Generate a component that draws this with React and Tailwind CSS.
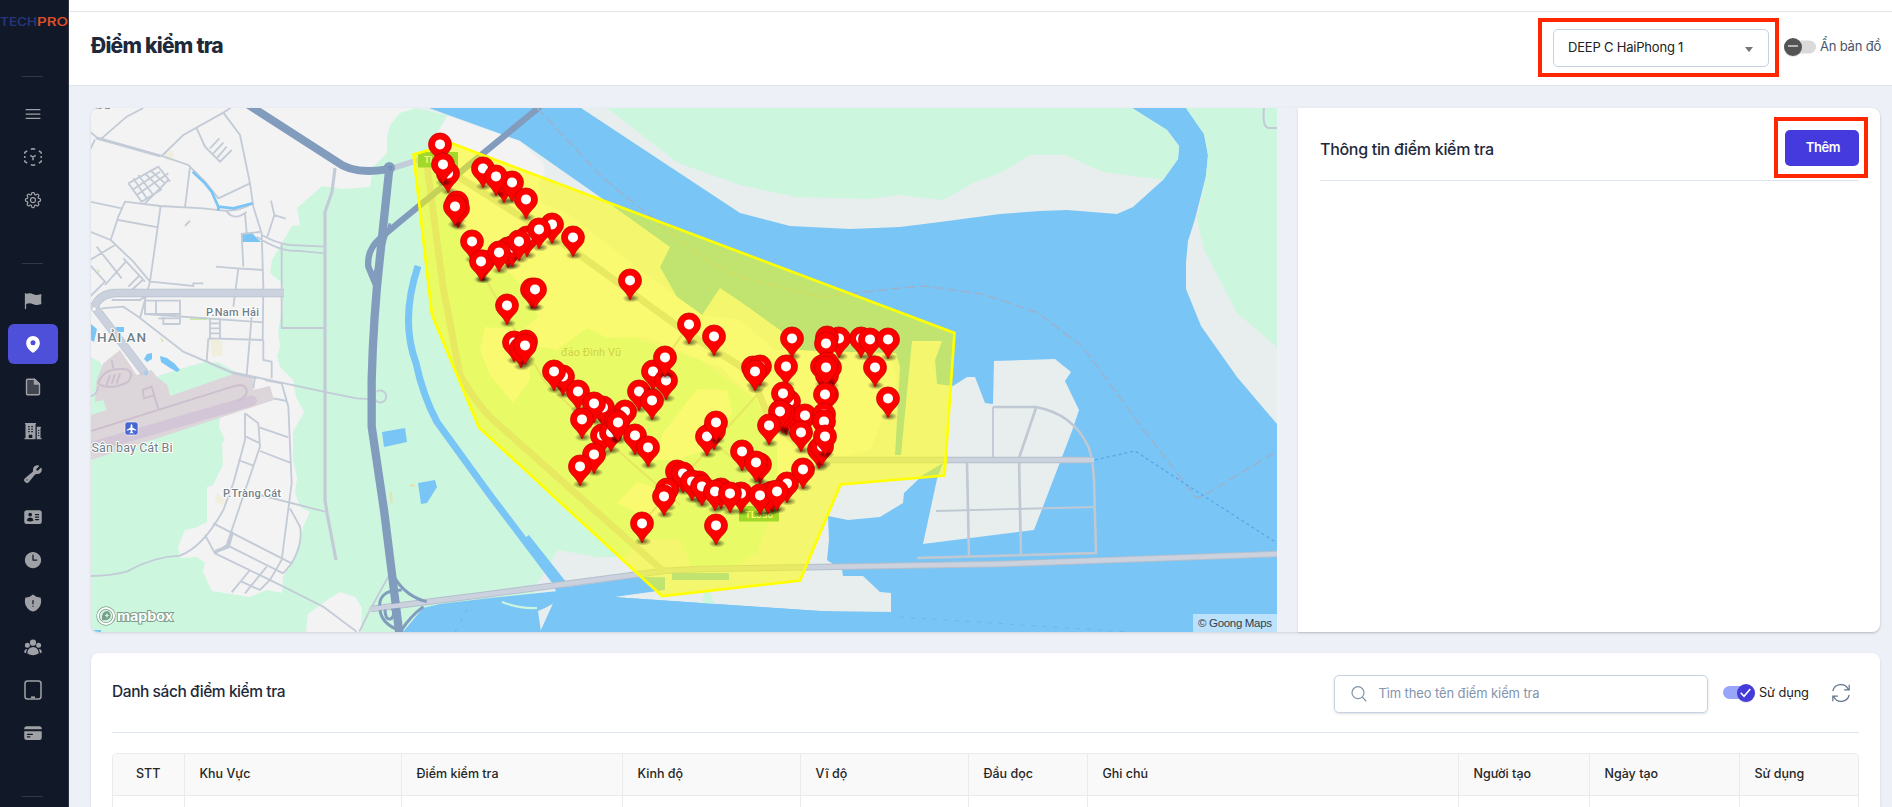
import React from 'react';
import {
  HiFlag, HiMapPin, HiBuildingOffice2, HiWrench, HiIdentification, HiClock,
  HiShieldExclamation, HiUserGroup, HiCreditCard, HiOutlineBars3, HiOutlineCog8Tooth,
} from 'react-icons/hi2';

const PINS = [
  [440,144],[448,173],[443,164],[483,168],[504,183],[512,182],[496,176],[526,199],[457,202],[458,208],[455,206],
  [472,241],[483,261],[481,261],[508,248],[512,247],[527,237],[519,241],[499,252],[552,224],[539,229],[573,237],
  [630,280],[689,324],[714,336],[532,289],[535,289],[507,305],[514,342],[526,341],[521,348],[525,345],
  [563,376],[554,371],[578,391],[603,407],[594,403],[582,419],[639,391],[653,371],[666,380],[665,357],[652,400],
  [625,411],[602,435],[611,432],[616,420],[618,422],[635,435],[648,447],[594,454],[580,466],[714,430],[707,436],[716,422],
  [742,451],[760,464],[756,462],[677,471],[683,473],[699,482],[692,481],[702,486],[667,489],[664,496],[642,523],[716,525],
  [721,489],[715,491],[741,493],[730,493],[772,492],[768,494],[760,495],[787,483],[777,491],[803,469],
  [792,338],[786,366],[753,367],[760,366],[755,371],[789,401],[783,393],[786,415],[783,413],[780,411],[769,425],[805,415],[801,432],
  [839,338],[827,337],[826,343],[861,338],[870,339],[888,339],[875,367],[888,398],[827,375],[822,366],[830,367],[827,363],[826,367],
  [827,394],[825,394],[824,414],[824,421],[819,449],[822,446],[825,436],
];

function Pin({ x, y }) {
  return (
    <g transform={`translate(${x} ${y + 0.4})`}>
      <ellipse cx="1" cy="18" rx="8.5" ry="4.2" fill="url(#pinShadow)" />
      <path d="M0 19.6C-1.6 15.4-4.6 11.6-8.4 7.9A11.5 11.5 0 1 1 8.4 7.9C4.6 11.6 1.6 15.4 0 19.6Z" fill="#fe0000" stroke="#c00000" strokeWidth=".7" />
      <circle r="5" fill="#fff" />
    </g>
  );
}

function MapView() {
  return (
    <svg className="block h-full w-full" viewBox="91 108 1186 524" preserveAspectRatio="none">
      <defs>
        <radialGradient id="pinShadow">
          <stop offset="0" stopColor="#000" stopOpacity=".6" />
          <stop offset="1" stopColor="#000" stopOpacity="0" />
        </radialGradient>
      </defs>
      <rect x="91" y="108" width="1186" height="524" fill="#78c5f6" />

      {/* east and north banks */}
      <path fill="#e7eeed" d="M581 108L740 213 790 226 850 229 900 227 940 222 1000 214 1040 211 1067 210 1117 214 1133 207 1163 180 1178 159 1179 146 1167 130 1132 108Z" />
      <path fill="#cdf6df" d="M607 108L678 163 740 185 796 197 868 199 900 195 943 200 973 183 1000 173 1030 155 1065 155 1103 172 1163 180 1178 159 1179 146 1167 130 1132 108Z" />
      <path fill="#e7eeed" d="M1186 108L1204 134 1208 155 1206 176 1195 219 1188 241 1186 262 1186 289 1201 326 1237 377 1277 424V108Z" />
      <path fill="#cdf6df" d="M1186 108L1204 134 1208 155 1206 176 1197 219 1204 250 1237 313 1277 347V108Z" />

      {/* main land */}
      <path fill="#e7eeed" d="M91 108H429L520 141 600 197 670 247 660 267 677 297 702 315 720 288 738 300 780 330 800 350 843 353 896 353 900 367 895 455 901 455 912 341 942 341 935 360 937 384 953 386 967 377 975 377 985 403 993 404 994 361 1055 359 1071 372 1065 381 1079 410 1072 431 1034 530 923 544 937 479 943 463 923 475 904 493 903 503 880 517 848 520 828 516 829 540 827 560 842 570 843 576 863 576 880 592 891 593V612L820 611 700 603 613 597 665 590 665 577 638 577 560 588 540 632H91Z" />
      <path fill="#cdf6df" d="M91 108H415L450 116 437 150 460 160 640 340 700 360 757 400 777 447 777 483 770 517 757 553 727 570 691 575 680 545 650 540 640 557 597 557 558 550 535 587 530 632H91Z" />
      <path fill="#cdf6df" d="M704 592H710L714 604H702Z" />
      <path fill="#f4f3f4" d="M447 116L520 141 543 163 545 172 538 183 542 203 570 215 640 270 702 315 740 320 775 350 890 353 897 380 870 450 829 460 790 470 777 483 777 447 757 400 720 367 700 360 647 337 607 338 587 328 557 350 530 345 530 380 513 403 490 375 480 350 485 327 523 330 538 317 530 295 510 273 485 270 460 235 437 165 436 135Z" />
      <path fill="#f4f3f4" d="M697 389L727 390 732 413 713 447 677 460 655 460 663 433ZM617 503L637 482 653 487 667 513 647 517Z" />
      <path fill="#e7eeed" d="M623 557L647 539 680 539 692 568 665 585Z" />
      <path fill="#f4f3f4" d="M91 108H415L400 113 390 125 387 137 387 153 373 167 370 187 343 189 322 186 297 208 300 225 292 226 282 243 272 260 270 273 282 283 283 307 278 330 280 347 277 357 280 367 293 380 296 397 304 412 293 432 293 460 297 478 295 493 300 507 310 512 303 527 300 542 292 563 283 577 282 593 267 590 250 597 212 591 203 572 205 563 197 557 180 558 178 547 185 530 195 528 207 522 207 487 213 485 223 465 222 443 225 440 219 427 220 418 253 404 252 376 224 371 204 362 158 376 142 395 91 395Z" />
      <path fill="#f4f3f4" d="M308 614L330 598 340 592 355 597 362 608 361 632H306Z" />
      <path fill="#cdf6df" d="M91 357L100 362 110 380 91 395ZM158 376L190 366 218 362 240 374 170 387Z" />

      {/* south-west waterways */}
      <path fill="#78c5f6" d="M403 632L423 608 440 604 490 598 558 591 556 602 545 608 538 611 541 632ZM573 632L580 606 590 594 580 588 637 578 665 577 665 589 613 597 820 611 891 616 895 632Z" />
      <path d="M502 602Q520 609 537 608" stroke="#cdf6df" strokeWidth="2" fill="none" />
      <path d="M418 266Q400 320 416 363 423 396 437 422L490 495 555 581 580 632" fill="none" stroke="#78c5f6" strokeWidth="7" />
      <path d="M525 538L562 585 585 632" fill="none" stroke="#78c5f6" strokeWidth="10" />
      <path fill="#78c5f6" d="M382 432L405 428 407 442 384 447ZM418 483L435 480 437 487 427 503 421 504ZM241 233H252L261 242H241ZM91 324L97 329 94 342 91 340ZM116 327H124V332H116ZM147 354L152 353 152 359 147 362 144 359ZM160 356L167 358 175 364 180 370 177 372 170 368 161 362ZM91 630H101V632H91Z" />
      <path fill="#f0eedc" d="M164 152L174 151 174 157 166 161ZM210 339L222 341 223 355 212 357ZM217 493L228 502 222 505 215 502Z" />
      <path fill="#dbe8bd" d="M410 484H415V487H410ZM389 492L392 491 393 502 390 503Z" />
      <path fill="#cdeaab" d="M190 317H207V320H190ZM160 337L164 341 162 342ZM97 268L100 271 98 273Z" />

      {/* airport */}
      <g transform="translate(90 360) scale(.33333)">
        <path fill="#dcd5da" d="M3 165L50 150 40 120 15 125 20 60 40 10 90 -30 140 45 185 30 200 50 232 75 240 108 430 42 488 50 490 90 540 78 552 120 3 300Z" />
        <path d="M3 262L485 122" stroke="#d3c6d6" strokeWidth="32" strokeLinecap="round" fill="none" />
        <path d="M3 213L420 82Q470 65 470 95 470 110 440 125M205 148L185 80 158 90 162 115 192 106M25 70Q40 20 110 28 135 40 115 65 70 90 30 75ZM50 75L60 45M65 72L75 42M80 70L90 40M65 0L70 25" stroke="#cdc0ce" strokeWidth="6" fill="none" />
      </g>

      {/* local streets */}
      <g fill="none" stroke="#c3cbd6" strokeWidth="5.5">
        <g transform="translate(90 100) scale(.33333)">
          <path d="M0 95L20 112 215 168 295 195 345 245 385 295M15 118L0 150M35 115L110 50 160 24M215 168L280 105 400 38 430 18M400 38L450 105 480 250 490 320 515 400 520 560 518 720M320 85L345 140 390 185 425 150M360 145L388 115M370 160L400 128M380 175L410 140M385 295L480 250M300 200L285 322M0 305L95 325M62 420L85 350 105 305 210 318 340 325 400 332Q450 335 488 310M410 335Q435 365 470 335M85 360L205 382M212 318L180 545 150 655M285 378L300 362M465 340L470 400M543 302L553 345 587 356M553 345L532 410M455 402L510 396M455 402L460 500M515 405Q560 430 600 435L705 440M500 410Q570 455 620 452L705 460M378 500L440 505 520 510M445 505L430 620M575 430V684H705M182 545L310 558V550H340M62 420L130 485 180 545M0 395L62 420M0 480L75 435M20 440L95 535M0 495L45 545 0 590M45 555L110 482M100 475L165 545M115 560L150 525M125 570L158 540M65 600H150L165 590M165 602H270V672M165 602V642H270M198 602V642M220 650V672H270M205 655H270" />
          <path d="M308 215L345 250 365 275 385 320V332M385 320L430 325 488 310" stroke="#78c5f6" strokeWidth="8" />
          <path d="M115 250L205 200 240 245M115 250L155 305 212 270M130 235L170 295M145 225L190 285M165 220L215 270M180 210L225 250M140 285L235 220M130 268L210 215M165 310L235 240" />
          <path d="M35 625L100 620 145 650 280 755 430 820 500 835M165 642L520 667M355 715L520 720M360 655V715M390 655V715M360 670H390M360 685H390M360 700H390M355 715L350 785M485 650L470 825M520 720V780L545 785V835" />
        </g>
        <g transform="translate(90 360) scale(.33333)">
          <path d="M340 0L420 35 560 65 700 95 800 115 855 118A18 18 0 1 0 860 95M495 50L490 85M525 60L575 70 595 140 605 370 575 600 540 660 510 690 455 665M550 115L590 123M465 160L505 190 510 260 410 555 375 580 345 525M465 160V240L430 370 400 450Q340 560 270 587 190 590 110 635 60 648 0 648M510 203L595 232M468 230L510 250M510 273L600 308M445 300L490 317M370 490L605 610M375 580L550 665 700 740 800 815M420 560L580 640M600 445L630 500Q640 550 605 610L580 640M425 697L480 630M465 700L530 620M510 405L705 455M808 815L840 750 895 650M3 108Q20 105 25 80" />
          <path d="M375 575L415 560 427 515" strokeWidth="10" />
        </g>
        <path d="M1264 108Q1262 128 1269 128H1277" strokeWidth="2" />
        <path d="M335 168L332 192 325 212V500L327 513 336 560" strokeWidth="3.2" />
        <path d="M96 138L160 156" strokeWidth="2.6" />
      </g>

      {/* port roads */}
      <g fill="none" stroke="#bfc8d3">
        <path d="M993 407H1036Q1073 414 1088 446 1093 458 1094 480L1096 553 917 558" strokeWidth="2.6" />
        <path d="M993 407V458M936 511L1096 507M917 558L1096 553" strokeWidth="1.8" />
        <path d="M1036 408L1019 458 1021 556M967 462L969 556" strokeWidth="2.6" />
      </g>

      {/* arterial roads */}
      <g fill="none" strokeLinejoin="round">
        <path d="M93 310Q98 294 115 293H284M96 309L145 373" stroke="#b7c1ce" strokeWidth="8.5" />
        <path d="M93 310Q98 294 115 293H284M96 309L145 373" stroke="#cbd2de" strokeWidth="7" />
        <circle cx="94" cy="309" r="2.5" fill="#f4f3f4" stroke="#b7c1ce" strokeWidth=".8" />
        <circle cx="146" cy="373" r="2.4" fill="#a9cfe6" />
        <path d="M371 609L490 594 663 571 700 569 1000 564 1277 554M827 460H1094" stroke="#b5bfcd" strokeWidth="6.5" />
        <path d="M371 609L490 594 663 571 700 569 1000 564 1277 554M827 460H1094" stroke="#cbd2de" strokeWidth="4.6" />
        <path d="M390 169L428 157" stroke="#c2ccda" strokeWidth="6" />
        <path d="M483 275L545 382 600 435 680 505M640 395L689 325M642 523L765 386M705 436L760 480" stroke="#c8cbd1" strokeWidth="2" />
        <path d="M427 165L443 287 460 375Q474 400 490 417L663 571M437 163L573 250 687 333 750 372 767 413Q800 452 827 460" stroke="#cbcfd4" strokeWidth="7" />
        <g transform="translate(90 100) scale(.33333)" stroke="#829cbd">
          <path d="M465 8L740 185Q790 225 890 208" strokeWidth="24" />
          <path d="M898 205L870 470Q850 650 845 840V980L882 1230 928 1600" strokeWidth="25" />
          <path d="M1350 20L930 365 870 415Q830 450 835 500L862 565" strokeWidth="19" />
          <path d="M900 370L880 440M848 530L862 500" strokeWidth="8" />
          <circle cx="898" cy="203" r="17" fill="#829cbd" stroke="none" />
          <path d="M895 205A5 5 0 1 1 897 208" stroke="#5c7da8" strokeWidth="2" />
          <path d="M915 1435Q950 1490 1010 1505M1000 1520Q960 1550 935 1590M935 1470Q860 1470 870 1530 875 1570 925 1590M885 1525Q885 1565 905 1555 920 1540 900 1515" strokeWidth="9" />
        </g>
        <path d="M371 609L402 605" stroke="#cbd2de" strokeWidth="4.6" strokeLinecap="round" />
        <path d="M537 108L603 178 640 208 710 263 740 277 820 297 900 288 923 286 983 294 1038 313 1083 347 1140 425 1196 498 1203 496 1277 451" stroke="#9fb0cb" strokeWidth="1.4" strokeDasharray="10 4" />
        <path d="M1095 460L1135 451 1193 489 1277 543" stroke="#54a5e5" strokeWidth="1.2" strokeDasharray="3 3" />
        <path d="M900 617L1130 632M455 632L471 602" stroke="#64b3ec" strokeWidth=".8" strokeDasharray="4 7" />
      </g>

      {/* map labels */}
      <g fontFamily="Roboto, sans-serif" fill="#6f8089" stroke="#fff" strokeWidth="2" paintOrder="stroke" strokeLinejoin="round">
        <text x="206" y="315.500" fontSize="11" fontWeight="500" textLength="53">P.Nam Hải</text>
        <text x="223" y="496.500" fontSize="11" fontWeight="500" textLength="58">P.Tràng Cát</text>
        <text x="97" y="342" fontSize="13.5" fontWeight="500" textLength="49">HẢI AN</text>
        <text x="91.5" y="452" fontSize="12.5" textLength="81">Sân bay Cát Bi</text>
        <text x="561" y="355.500" fontSize="11" textLength="60" stroke="none" fill="#9a9a9a">đảo Đình Vũ</text>
      </g>
      <path d="M94 108.500h3.500M98.500 108.500h3M105 108.500h5" stroke="#8a959c" strokeWidth="1.200" />
      <rect x="125" y="422" width="13" height="13" rx="2.500" fill="#4566d3" stroke="#fff" strokeWidth=".6" />
      <path d="M131.500 424l.9 1v2.500l3.800 2.300v1l-3.800-1v2.200l1.200.9v.7l-2.100-.5-2.100.5v-.7l1.200-.9v-2.200l-3.800 1v-1l3.800-2.300v-2.500z" fill="#fff" />

      <g fontFamily="Roboto, sans-serif" fontSize="9.500" fontWeight="500" fill="#fff">
        <rect x="418" y="152" width="40" height="15.500" rx="1" fill="#35ad5a" />
        <text x="424" y="163">TL356</text>
        <rect x="739" y="506" width="40" height="15.500" rx="1" fill="#35ad5a" />
        <text x="745" y="518" textLength="28">TL356</text>
      </g>
      <path d="M672 573H729V580H672Z" fill="#78c5f6" />

      {/* monitored area */}
      <path d="M413.500 154.500L452 143.500 955 333 944.500 475.500 840.500 484.500 800 580.500 662 596 479 427.500 432 315Z" fill="#ffff00" fillOpacity=".54" />
      <path d="M413.500 154.500L452 143.500 954.500 333 944.500 475.500 840.500 484.500 800 580.500 662 596 479 427.500 432 315Z" fill="none" stroke="#ffff00" strokeWidth="2.700" />

      {PINS.map(([x, y], i) => <Pin key={i} x={x} y={y} />)}

      {/* provider mark */}
      <g>
        <circle cx="106" cy="616" r="8" fill="none" stroke="#7d9c8b" strokeWidth="3.400" />
        <circle cx="106" cy="616" r="8" fill="none" stroke="#fff" strokeWidth="1.900" />
        <path d="M102 620Q101 611 108 611 112 614 110 618 107 621 102 620ZM107 613l.8 1.700 1.700.8-1.700.8-.8 1.700-.8-1.700-1.700-.8 1.700-.8Z" fill="#7d9c8b" fillRule="evenodd" />
        <text x="117" y="620.500" fontFamily="Inter, sans-serif" fontSize="13" fontWeight="700" textLength="56" lengthAdjust="spacingAndGlyphs" fill="#fff" stroke="#7d9c8b" strokeWidth="1.800" paintOrder="stroke">mapbox</text>
      </g>
      <rect x="1193" y="614" width="84" height="18" fill="#fff" fillOpacity=".5" />
      <text x="1198" y="627" fontFamily="Liberation Sans, sans-serif" fontSize="11.500" textLength="74" fill="#33404a">© Goong Maps</text>
    </svg>
  );
}

function ScanIcon() {
  return (
    <svg viewBox="0 0 18 18" className="size-[18px]" fill="none" stroke="currentColor" strokeWidth="1.5">
      <path d="M.8 5.800V4.500L3.200 2.800M6.800 1.200L9 .8 11.200 1.200M14.800 2.800L17.200 4.500V5.800M17.200 8v2M17.200 12.200V13.500L14.800 15.200M11.200 16.800L9 17.200 6.800 16.800M3.200 15.200L.8 13.500V12.200M.8 8v2M6.300 7.400L9 9.200 11.700 7.400M9 9.200V12.200" />
    </svg>
  );
}

function DocIcon() {
  return (
    <svg viewBox="0 0 16 18" className="h-[18px] w-4" stroke="currentColor" strokeWidth="1.400" strokeLinejoin="round">
      <path d="M1.500 2.500Q1.500 1.200 2.800 1.200H9.500L14.500 6V15.500Q14.500 16.800 13.200 16.800H2.800Q1.500 16.800 1.500 15.500Z" fill="#41454f" />
      <path d="M9.500 1.200V6H14.500Z" fill="currentColor" />
    </svg>
  );
}

function TabletIcon() {
  return (
    <svg viewBox="0 0 18 20" className="h-5 w-[18px]" fill="none" stroke="currentColor" strokeWidth="1.500">
      <rect x="1" y="1" width="16" height="18" rx="2.500" />
      <path d="M7 17.300h4" strokeWidth="1.800" />
    </svg>
  );
}

function SideItem({ active, children }) {
  return (
    <div className={active
      ? 'flex h-10 w-[50px] items-center justify-center rounded-md bg-[#4f50d9] text-white'
      : 'flex h-10 w-[50px] items-center justify-center text-[#9fa1a7]'}>
      {children}
    </div>
  );
}

function Sidebar() {
  return (
    <aside className="flex h-full w-[69px] shrink-0 flex-col overflow-hidden border-r border-[#2d3341] bg-[#111827]">
      <div className="h-[76px] shrink-0 pt-4">
        <svg viewBox="0 0 69 14" className="block h-3.5 w-[69px]" fontFamily="Inter, sans-serif" fontSize="11.200" fontWeight="600">
          <text x="0" y="10" textLength="37" lengthAdjust="spacingAndGlyphs" fill="#25357d">TECH</text>
          <text x="37" y="10" textLength="31" lengthAdjust="spacingAndGlyphs" fill="#d84f2a">PRO</text>
        </svg>
      </div>
      <div className="ml-[22px] h-px w-[21px] shrink-0 bg-[#323946]" />
      <div className="ml-2 mt-[17px] flex shrink-0 flex-col gap-[3px]">
        <SideItem><HiOutlineBars3 className="size-5" /></SideItem>
        <SideItem><ScanIcon /></SideItem>
        <SideItem><HiOutlineCog8Tooth className="size-5" /></SideItem>
      </div>
      <div className="ml-[22px] mt-[43px] h-px w-[21px] shrink-0 bg-[#323946]" />
      <div className="ml-2 mt-[17px] flex shrink-0 flex-col gap-[3.2px]">
        <SideItem><HiFlag className="size-5" /></SideItem>
        <SideItem active><HiMapPin className="size-5" /></SideItem>
        <SideItem><DocIcon /></SideItem>
        <SideItem><HiBuildingOffice2 className="size-5" /></SideItem>
        <SideItem><HiWrench className="size-5" /></SideItem>
        <SideItem><HiIdentification className="size-5" /></SideItem>
        <SideItem><HiClock className="size-5" /></SideItem>
        <SideItem><HiShieldExclamation className="size-5" /></SideItem>
        <SideItem><HiUserGroup className="size-5" /></SideItem>
        <SideItem><TabletIcon /></SideItem>
        <SideItem><HiCreditCard className="size-5" /></SideItem>
      </div>
      <div className="ml-[22px] mt-[43px] h-px w-[21px] shrink-0 bg-[#323946]" />
    </aside>
  );
}

function OffSwitch() {
  return (
    <svg viewBox="0 0 34 20" className="h-5 w-[34px] shrink-0">
      <rect x="6" y="3.500" width="27" height="13" rx="6.500" fill="#dadada" />
      <circle cx="10" cy="10.800" r="9" fill="#000" fillOpacity=".15" />
      <circle cx="10" cy="10" r="9" fill="#545454" />
      <path d="M5 9h10" stroke="#c8c8c8" strokeWidth="1.700" />
    </svg>
  );
}

function OnSwitch() {
  return (
    <svg viewBox="0 0 34 20" className="h-5 w-[34px] shrink-0">
      <rect x="1" y="3" width="30" height="13" rx="6.500" fill="#98a5f8" />
      <circle cx="24" cy="10.800" r="9" fill="#000" fillOpacity=".15" />
      <circle cx="24" cy="10" r="9" fill="#453adb" />
      <path d="M18.700 9.800l3.300 3.400 6.300-7.200" stroke="#fff" strokeWidth="1.600" fill="none" />
    </svg>
  );
}

function Header() {
  return (
    <header className="flex h-[86px] shrink-0 flex-col border-b border-[#dfe4ea] bg-white">
      <div className="h-3 shrink-0 border-b border-[#e4e6e9]" />
      <div className="flex h-[73px] items-start justify-between pl-[22px] pr-3">
        <h1 className="mt-[18px] text-[21px] font-extrabold leading-[32px] tracking-[-0.75px] text-[#1e293b]">Điểm kiểm tra</h1>
        <div className="flex">
          <div className="mt-1.5 h-[59px] w-[241px] border-4 border-[#ff2600] pl-[11px] pr-1.5 pt-[7px]">
            <div className="flex h-[38px] w-[216px] items-center justify-between rounded-[5px] border border-[#c5d2e2] pl-3.5 pr-[15px]">
              <span className="text-[13px] tracking-[-0.2px] text-[#212121]">DEEP C HaiPhong 1</span>
              <span className="mt-0.5 border-x-[4.5px] border-t-[5px] border-x-transparent border-t-[#757575]" />
            </div>
          </div>
          <div className="ml-1 mt-[23px] flex h-6 items-center">
            <OffSwitch />
            <span className="ml-[3px] w-[60px] whitespace-nowrap text-[13px] tracking-[-0.2px] text-[#475569]">Ẩn bản đồ</span>
          </div>
        </div>
      </div>
    </header>
  );
}

const COLUMNS = [
  ['STT', 'w-[71.5px]', 'justify-center'],
  ['Khu Vực', 'w-[217px]', ''],
  ['Điểm kiểm tra', 'w-[221px]', ''],
  ['Kinh độ', 'w-[178px]', ''],
  ['Vĩ độ', 'w-[168px]', ''],
  ['Đầu đọc', 'w-[119px]', ''],
  ['Ghi chú', 'w-[371px]', ''],
  ['Người tạo', 'w-[131px]', ''],
  ['Ngày tạo', 'w-[150px]', ''],
  ['Sử dụng', 'grow', ''],
];

function PointsCard() {
  return (
    <section className="mt-[21px] flex min-h-0 flex-1 flex-col rounded-t-lg bg-white px-[21px] shadow-sm">
      <div className="flex h-20 shrink-0 items-center border-b border-[#dde4ee] pt-[3px]">
        <h2 className="-mt-[5px] text-[15.5px] font-medium tracking-[-0.43px] text-[#1e293b]">Danh sách điểm kiểm tra</h2>
        <div className="ml-auto flex h-[38px] w-[374px] items-center rounded-[5px] border border-[#c5d2e2] pl-4 shadow-sm">
          <svg viewBox="0 0 16 16" className="size-4" fill="none" stroke="#8493aa" strokeWidth="1.200">
            <circle cx="7" cy="6.700" r="6" />
            <path d="M11.300 11l4 4.300" />
          </svg>
          <span className="-mt-px ml-[11.5px] text-[13px] tracking-[-0.12px] text-[#8394ad]">Tìm theo tên điểm kiểm tra</span>
        </div>
        <div className="-mt-0.5 ml-3.5 flex items-center">
          <OnSwitch />
          <span className="ml-[3px] w-[50px] whitespace-nowrap text-[12.8px] tracking-[-0.1px] text-[#212121]">Sử dụng</span>
        </div>
        <svg viewBox="0 0 20 20" className="-mt-0.5 ml-[22px] mr-2 size-5" fill="none" stroke="#64748b" strokeWidth="1.200">
          <path d="M1.800 8A8.300 8.300 0 0 1 17.300 6.200M18.200 1.800V6.800H13.200M18.200 12A8.300 8.300 0 0 1 2.700 13.800M1.800 18.200V13.200H6.800" />
        </svg>
      </div>
      <div className="mt-5 flex min-h-0 flex-1 overflow-hidden rounded-t-[5px] border border-b-0 border-[#ebebeb] bg-white">
        {COLUMNS.map(([label, width, align], i) => (
          <div key={label} className={`flex shrink-0 flex-col ${width} ${i < COLUMNS.length - 1 ? 'border-r border-[#ebebeb]' : ''}`}>
            <div className={`flex h-[42px] shrink-0 items-center border-b border-[#ebebeb] bg-[#f9f9f9] ${align} ${i ? 'pl-[15px]' : ''}`}>
              <span className="whitespace-nowrap text-[12.5px] font-medium text-[#262626]">{label}</span>
            </div>
          </div>
        ))}
      </div>
    </section>
  );
}

export default function App() {
  return (
    <div className="flex h-[807px] w-full overflow-hidden bg-[#edf1f7] font-['Inter','Noto_Sans',sans-serif]">
      <Sidebar />
      <main className="flex min-w-0 flex-1 flex-col">
        <Header />
        <div className="flex min-h-0 flex-1 flex-col pl-[22px] pr-3 pt-[22px]">
          <div className="flex h-[524px] shrink-0 rounded-lg shadow-sm">
            <div className="w-[1186px] shrink-0 overflow-hidden rounded-l-lg">
              <MapView />
            </div>
            <section className="ml-[21px] min-w-0 flex-1 rounded-r-lg bg-white pl-[22px] shadow-sm">
              <div className="mr-[21px] flex h-[73px] justify-between border-b border-[#dde4ee]">
                <h2 className="mt-[29px] text-[16px] font-medium leading-6 tracking-[-0.3px] text-[#1e293b]">Thông tin điểm kiểm tra</h2>
                <div className="-mr-[9px] mt-[9px] flex h-[61px] w-[94px] items-center justify-center border-4 border-[#ff2600] pl-0.5">
                  <button className="h-9 w-[74px] rounded-[5px] bg-[#453ade] pl-0.5 text-[13px] font-semibold tracking-[-0.4px] text-white">Thêm</button>
                </div>
              </div>
            </section>
          </div>
          <PointsCard />
        </div>
      </main>
    </div>
  );
}
